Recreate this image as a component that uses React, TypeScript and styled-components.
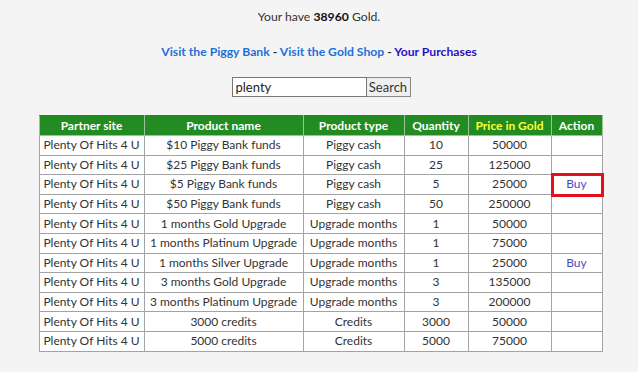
import React from "react";
import styled, { createGlobalStyle } from "styled-components";

const GlobalStyle = createGlobalStyle`
  body {
    margin: 0;
    background: #f4f4f4;
    font-family: Lato, "Open Sans", sans-serif;
    font-size: 12px;
    color: #333;
  }
`;

type Row = {
  product: string;
  type: string;
  qty: number;
  price: number;
  buy?: boolean;
  marked?: boolean;
};

const rows: Row[] = [
  { product: "$10 Piggy Bank funds", type: "Piggy cash", qty: 10, price: 50000 },
  { product: "$25 Piggy Bank funds", type: "Piggy cash", qty: 25, price: 125000 },
  { product: "$5 Piggy Bank funds", type: "Piggy cash", qty: 5, price: 25000, buy: true, marked: true },
  { product: "$50 Piggy Bank funds", type: "Piggy cash", qty: 50, price: 250000 },
  { product: "1 months Gold Upgrade", type: "Upgrade months", qty: 1, price: 50000 },
  { product: "1 months Platinum Upgrade", type: "Upgrade months", qty: 1, price: 75000 },
  { product: "1 months Silver Upgrade", type: "Upgrade months", qty: 1, price: 25000, buy: true },
  { product: "3 months Gold Upgrade", type: "Upgrade months", qty: 3, price: 135000 },
  { product: "3 months Platinum Upgrade", type: "Upgrade months", qty: 3, price: 200000 },
  { product: "3000 credits", type: "Credits", qty: 3000, price: 50000 },
  { product: "5000 credits", type: "Credits", qty: 5000, price: 75000 },
];

const columns = [
  { label: "Partner site", w: 104 },
  { label: "Product name", w: 158 },
  { label: "Product type", w: 100 },
  { label: "Quantity", w: 63 },
  { label: "Price in Gold", w: 82, gold: true },
  { label: "Action", w: 50 },
];

const Page = styled.div`
  display: flex;
  flex-direction: column;
  align-items: center;
  padding-top: 8px;
`;

const Balance = styled.div`
  font-size: 12.2px;
  line-height: 18px;
  b {
    color: #111;
  }
`;

const Nav = styled.div`
  margin-top: 17px;
  font-size: 12.2px;
  line-height: 18px;
  font-weight: 700;
`;

const NavLink = styled.a<{ $visited?: boolean }>`
  color: ${({ $visited }) => ($visited ? "#2a12c4" : "#1d6fdb")};
  text-decoration: none;
`;

const SearchForm = styled.form`
  display: flex;
  margin-top: 16px;
  margin-left: 4px;
`;

const SearchInput = styled.input`
  box-sizing: border-box;
  width: 135px;
  height: 20px;
  border: 1px solid #767676;
  padding: 0 3px;
  font: inherit;
  font-size: 13px;
  color: #222;
  background: #fff;
`;

const SearchButton = styled.button`
  box-sizing: border-box;
  height: 20px;
  width: 44px;
  padding: 0;
  border: 1px solid #8a8a8a;
  border-left: none;
  background: #efefef;
  font: inherit;
  font-size: 13px;
  color: #333;
`;

const Table = styled.table`
  width: 563px;
  margin: 18px 0 0 3px;
  border-collapse: collapse;
  table-layout: fixed;
  background: #fff;
`;

const HeadCell = styled.th<{ $w: number; $gold?: boolean }>`
  width: ${({ $w }) => $w}px;
  height: 19px;
  padding: 0;
  background: #228b22;
  color: ${({ $gold }) => ($gold ? "#ffff33" : "#fff")};
  font-weight: 700;
  border: 1px solid #9cc29c;
  border-top-color: #228b22;
  line-height: 18px;
  white-space: nowrap;
`;

const Cell = styled.td`
  position: relative;
  height: 18.6px;
  padding: 0;
  border: 1px solid #a3a3a3;
  text-align: center;
  line-height: 18px;
  white-space: nowrap;
`;

const BuyLink = styled.a`
  color: #4b4bc8;
  text-decoration: none;
`;

const Marker = styled.span`
  position: absolute;
  left: -1px;
  right: -2px;
  top: -2px;
  bottom: -3px;
  border: 3px solid #e3101c;
  pointer-events: none;
`;

export default function App() {
  return (
    <>
      <GlobalStyle />
      <Page>
        <Balance>
          Your have <b>38960</b> Gold.
        </Balance>
        <Nav>
          <NavLink href="#">Visit the Piggy Bank</NavLink> -{" "}
          <NavLink href="#">Visit the Gold Shop</NavLink> -{" "}
          <NavLink href="#" $visited>
            Your Purchases
          </NavLink>
        </Nav>
        <SearchForm onSubmit={(e) => e.preventDefault()}>
          <SearchInput defaultValue="plenty" />
          <SearchButton type="submit">Search</SearchButton>
        </SearchForm>
        <Table>
          <thead>
            <tr>
              {columns.map((c) => (
                <HeadCell key={c.label} $w={c.w} $gold={c.gold}>
                  {c.label}
                </HeadCell>
              ))}
            </tr>
          </thead>
          <tbody>
            {rows.map((r) => (
              <tr key={r.product}>
                <Cell>Plenty Of Hits 4 U</Cell>
                <Cell>{r.product}</Cell>
                <Cell>{r.type}</Cell>
                <Cell>{r.qty}</Cell>
                <Cell>{r.price}</Cell>
                <Cell>
                  {r.buy && <BuyLink href="#">Buy</BuyLink>}
                  {r.marked && <Marker />}
                </Cell>
              </tr>
            ))}
          </tbody>
        </Table>
      </Page>
    </>
  );
}
